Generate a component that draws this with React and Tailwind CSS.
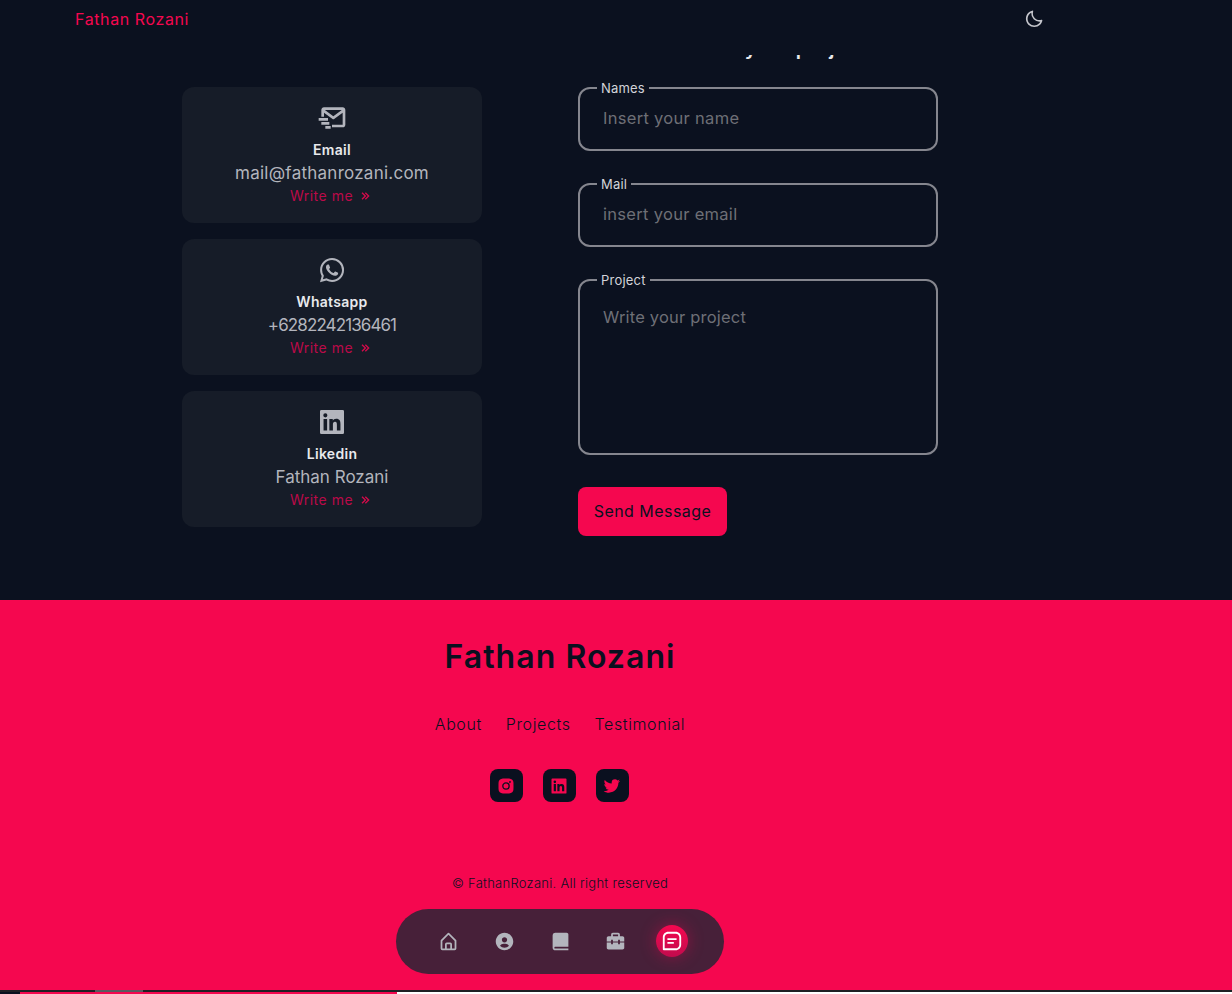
import {
  BiMailSend,
  BiLogoWhatsapp,
  BiLogoLinkedinSquare,
  BiMoon,
  BiLogoInstagramAlt,
  BiLogoTwitter,
  BiHomeAlt,
  BiSolidUserCircle,
  BiSolidBookAlt,
  BiSolidBriefcaseAlt2,
  BiMessageSquareDetail,
  BiChevronsRight,
} from "react-icons/bi";

const contacts = [
  { icon: BiMailSend, title: "Email", value: "mail@fathanrozani.com", valueClass: "tracking-[0.25px]" },
  { icon: BiLogoWhatsapp, title: "Whatsapp", value: "+6282242136461", valueClass: "tracking-[-0.9px]" },
  { icon: BiLogoLinkedinSquare, title: "Likedin", value: "Fathan Rozani", valueClass: "" },
];

const navIcons = [BiHomeAlt, BiSolidUserCircle, BiSolidBookAlt, BiSolidBriefcaseAlt2];

const Field = ({ label, placeholder, area }) => (
  <div className="relative">
    <label className="absolute -top-[8px] left-[19px] bg-[#0b111f] px-1 text-[13px] leading-[18px] tracking-[0.2px] text-[#d3d4d9]">
      {label}
    </label>
    {area ? (
      <textarea
        placeholder={placeholder}
        className="block h-[176px] w-full resize-none rounded-xl border-2 border-[#85868e] bg-transparent pl-[23px] pr-6 pt-[22px] text-[16.5px] leading-[28px] tracking-[0.2px] outline-none placeholder:text-[#6e6f76]"
      />
    ) : (
      <input
        placeholder={placeholder}
        className="block h-16 w-full rounded-xl border-2 border-[#85868e] bg-transparent pb-[2px] pl-[23px] pr-6 text-[16.5px] tracking-[0.3px] outline-none placeholder:text-[#6e6f76]"
      />
    )}
  </div>
);

export default function App() {
  return (
    <div className="relative h-[994px] overflow-hidden bg-[#0b111f] font-['Inter',sans-serif]">
      <header className="absolute left-0 top-0 z-10 h-[55px] w-full bg-[#0b111f]">
        <div className="flex h-[38px] w-[1120px] items-center justify-between pl-[75px] pr-[76px]">
          <a className="text-base tracking-[0.6px] text-[#f5074f]">Fathan Rozani</a>
          <BiMoon className="text-[20px] text-[#c5c6cc]" />
        </div>
      </header>

      <main className="h-[600px] w-[1120px] pt-[33px]">
        <div className="mx-auto grid w-[756px] grid-cols-[300px_360px] gap-x-24">
          <div>
            <h2 className="mb-6 text-center text-xl font-semibold leading-[30px] tracking-[0.3px] text-[#e8e9ec]">Talk to me</h2>
            <div className="flex flex-col gap-4">
              {contacts.map((item) => (
                <div key={item.title} className="flex h-[136px] flex-col items-center rounded-xl bg-[#161c28] pt-[15px]">
                  <item.icon className="text-[32px] text-[#b3b5bd]" />
                  <h3 className="mt-[6px] text-sm font-semibold leading-5 tracking-[0.3px] text-[#e8e9ec]">{item.title}</h3>
                  <span className={`mt-[1px] text-[17px] leading-[24px] text-[#b3b5bd] ${item.valueClass}`}>{item.value}</span>
                  <a className="flex items-center gap-[5px] text-sm leading-[21px] tracking-[0.5px] text-[#bb0a48]">
                    Write me <BiChevronsRight className="text-[16px] text-[#d60a4b]" />
                  </a>
                </div>
              ))}
            </div>
          </div>
          <div>
            <h2 className="mb-6 text-center text-xl font-semibold leading-[30px] tracking-[0.45px] text-[#e8e9ec]">Write me your project</h2>
            <form className="flex flex-col gap-8">
              <Field label="Names" placeholder="Insert your name" />
              <Field label="Mail" placeholder="insert your email" />
              <Field label="Project" placeholder="Write your project" area />
              <button type="button" className="h-[49px] w-[149px] rounded-lg bg-[#f5074f] pb-[2px] text-base tracking-[0.45px] text-[#0a101f]">
                Send Message
              </button>
            </form>
          </div>
        </div>
      </main>

      <footer className="h-[390px] bg-[#f5074f]">
        <div className="flex w-[1120px] flex-col items-center text-[#0a101f]">
          <h1 className="mt-[33px] text-[32px] font-semibold leading-[48px] tracking-[1.05px]">Fathan Rozani</h1>
          <ul className="mt-[31px] flex gap-6 text-base font-light leading-6 tracking-[0.6px]">
            <li>About</li>
            <li>Projects</li>
            <li>Testimonial</li>
          </ul>
          <div className="mt-[33px] flex -translate-x-[1px] gap-5">
            {[BiLogoInstagramAlt, BiLogoLinkedinSquare, BiLogoTwitter].map((Icon, i) => (
              <a key={i} className="flex size-[33px] items-center justify-center rounded-lg bg-[#0a101f] text-[#f5074f]">
                <Icon className="text-[20px]" />
              </a>
            ))}
          </div>
          <span className="mt-[71px] text-[13px] font-light leading-5 tracking-[0.27px]">© FathanRozani. All right reserved</span>
        </div>
      </footer>

      <div className="relative h-[2px] bg-[#1f2024]">
        <div className="absolute left-[95px] top-0 h-[2px] w-[48px] bg-[#5a5b60]" />
      </div>
      <div className="flex h-[2px] bg-white">
        <div className="w-5 bg-[#0a101f]" />
        <div className="w-[377px] bg-[#f5074f]" />
      </div>

      <nav className="absolute left-[396px] top-[909px] flex h-[65px] w-[328px] items-center justify-center gap-[23.75px] rounded-full bg-[#472039] pb-[1px]">
        {navIcons.map((Icon, i) => (
          <a key={i} className="flex size-8 items-center justify-center text-[#b3b5bd]">
            <Icon className="text-[21px]" />
          </a>
        ))}
        <a className="flex size-8 items-center justify-center rounded-full bg-gradient-to-b from-[#f5074f] to-[#c20b4d] text-white shadow-[0_0_16px_#f5074f66]">
          <BiMessageSquareDetail className="text-[22px]" />
        </a>
      </nav>
    </div>
  );
}
